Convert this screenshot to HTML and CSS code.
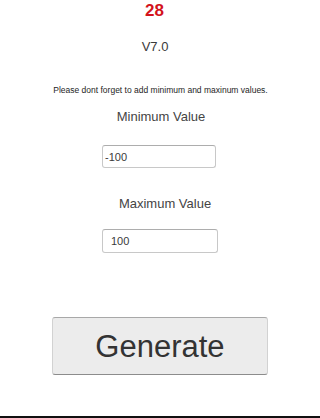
FILE: index.html
```html
<!DOCTYPE html>
<html lang="en">
<head>
<meta charset="utf-8">
<title>Random Number Generator</title>
<link rel="stylesheet" href="styles.css">
</head>
<body>
<main class="app">
  <div class="count">28</div>
  <div class="version">V7.0</div>
  <p class="note">Please dont forget to add minimum and maxinum values.</p>
  <label class="label label-min" for="min">Minimum Value</label>
  <input class="field field-min" id="min" type="text" value="-100">
  <label class="label label-max" for="max">Maximum Value</label>
  <input class="field field-max" id="max" type="text" value="100">
  <button class="generate" type="button">Generate</button>
  <div class="footer-line"></div>
</main>
</body>
</html>
```

FILE: styles.css
```css
html, body {
  margin: 0;
  padding: 0;
  background: #ffffff;
}

body {
  font-family: "Liberation Sans", Arial, sans-serif;
  color: #333333;
  overflow: hidden;
}

.app {
  display: flex;
  flex-direction: column;
  align-items: center;
  width: 320px;
  height: 418px;
}

.count {
  margin: 1px 11px 0 0;
  font-size: 17px;
  line-height: 20px;
  font-weight: bold;
  color: #d3131d;
}

.version {
  margin: 18px 10px 0 0;
  font-size: 13px;
  line-height: 16px;
  color: #3a3a3a;
}

.note {
  margin: 30px 0 0 1px;
  font-size: 8.5px;
  line-height: 10px;
  color: #1e1e1e;
  white-space: nowrap;
}

.label {
  font-size: 13px;
  line-height: 16px;
  color: #444444;
}

.label-min {
  margin: 14px 0 0 2px;
}

.label-max {
  margin: 28px 0 0 10px;
}

.field {
  box-sizing: border-box;
  margin: 0;
  font-family: "Liberation Sans", Arial, sans-serif;
  font-size: 11px;
  color: #3a3a3a;
  background: #ffffff;
  border: 1px solid #c8c8c8;
  border-top-color: #adadad;
  border-radius: 3px;
  outline: none;
}

.field-min {
  margin: 20px 2px 0 0;
  width: 114px;
  height: 23px;
  padding: 0 2px;
}

.field-max {
  margin: 17px 0 0 0;
  width: 116px;
  height: 24px;
  padding: 0 8px;
}

.generate {
  box-sizing: border-box;
  margin: 64px 0 0 0;
  width: 216px;
  height: 58px;
  padding: 2px 0 0 0;
  font-family: "Liberation Sans", Arial, sans-serif;
  font-size: 31px;
  color: #333333;
  background: #ececec;
  border: 1px solid #d2d2d2;
  border-top-color: #a8a8a8;
  border-bottom-color: #8c8c8c;
  border-radius: 3px;
}

.footer-line {
  align-self: stretch;
  margin-top: 41px;
  border-top: 2px solid #111111;
}
```
